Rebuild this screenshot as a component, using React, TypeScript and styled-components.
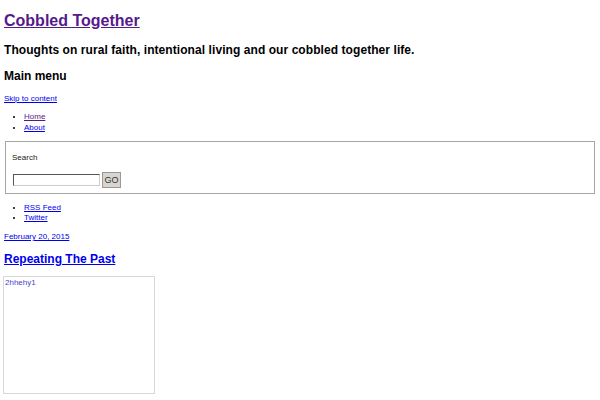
import React from "react";
import styled, { createGlobalStyle } from "styled-components";

const Global = createGlobalStyle`
  html, body { margin: 0; padding: 0; background: #fff; }
  body { font-family: "Liberation Sans", Arial, sans-serif; color: #000; }
  a { color: #0000ee; }
`;

const Page = styled.div`
  padding: 0 4px;
  display: flex;
  flex-direction: column;
  align-items: flex-start;
`;

const SiteTitle = styled.h1`
  margin: 11px 0 0;
  font-size: 16px;
  line-height: 20px;
  font-weight: bold;
  a { color: #551a8b; }
`;

const Tagline = styled.h2`
  margin: 11px 0 0;
  font-size: 12px;
  line-height: 16px;
  font-weight: bold;
  letter-spacing: 0.07px;
`;

const MenuHeading = styled.h3`
  margin: 10px 0 0;
  font-size: 12px;
  line-height: 16px;
  font-weight: bold;
`;

const SmallLink = styled.a<{ $visited?: boolean; $mt?: number }>`
  display: block;
  margin-top: ${(p) => p.$mt ?? 0}px;
  font-size: 8px;
  line-height: 10px;
  color: ${(p) => (p.$visited ? "#551a8b" : "#0000ee")};
`;

const List = styled.ul<{ $mt: number; $lh: number }>`
  margin: ${(p) => p.$mt}px 0 0;
  padding: 0 0 0 20px;
  font-size: 8px;
  line-height: ${(p) => p.$lh}px;
`;

const Item = styled.li<{ $visited?: boolean }>`
  a { color: ${(p) => (p.$visited ? "#551a8b" : "#0000ee")}; }
`;

const SearchBox = styled.form`
  align-self: stretch;
  margin: 8px 1px 0;
  border: 1px solid #a6a6a6;
  height: 51px;
  padding: 0 6px;
  display: flex;
  flex-direction: column;
  align-items: flex-start;
`;

const SearchLabel = styled.label`
  margin-top: 11px;
  font-size: 8px;
  line-height: 10px;
  color: #222;
`;

const SearchRow = styled.div`
  margin-top: 9px;
  display: flex;
  align-items: center;
  gap: 2px;
  padding-left: 1px;
`;

const SearchInput = styled.input`
  box-sizing: border-box;
  width: 87px;
  height: 12px;
  margin: 0;
  padding: 0;
  border: 1px solid #555;
  border-right-color: #ccc;
  border-bottom-color: #ccc;
  background: #fff;
`;

const GoButton = styled.button`
  box-sizing: border-box;
  width: 19px;
  height: 16px;
  margin: 0;
  padding: 0;
  border: 1px solid #999;
  background: #d8d5cf;
  font-family: "Liberation Sans", Arial, sans-serif;
  font-size: 9px;
  color: #333;
`;

const PostTitle = styled.h2`
  margin: 9px 0 0;
  font-size: 12px;
  line-height: 16px;
  font-weight: bold;
`;

const ImageBox = styled.a`
  display: block;
  margin: 9px 0 0 -1px;
  box-sizing: border-box;
  width: 152px;
  height: 118px;
  border: 1px solid #d8d8d8;
  padding: 1px 0 0 1px;
  font-size: 8px;
  line-height: 10px;
  color: #4a3fd6;
  text-decoration: none;
`;

export default function App() {
  return (
    <>
      <Global />
      <Page>
        <SiteTitle><a href="#">Cobbled Together</a></SiteTitle>
        <Tagline>Thoughts on rural faith, intentional living and our cobbled together life.</Tagline>
        <MenuHeading>Main menu</MenuHeading>
        <SmallLink href="#" $mt={10}>Skip to content</SmallLink>
        <List $mt={7} $lh={11}>
          <Item $visited><a href="#">Home</a></Item>
          <Item><a href="#">About</a></Item>
        </List>
        <SearchBox onSubmit={(e) => e.preventDefault()}>
          <SearchLabel>Search</SearchLabel>
          <SearchRow>
            <SearchInput type="text" />
            <GoButton type="submit">GO</GoButton>
          </SearchRow>
        </SearchBox>
        <List $mt={9} $lh={10}>
          <Item><a href="#">RSS Feed</a></Item>
          <Item><a href="#">Twitter</a></Item>
        </List>
        <SmallLink href="#" $mt={9}>February 20, 2015</SmallLink>
        <PostTitle><a href="#">Repeating The Past</a></PostTitle>
        <ImageBox href="#">2hhehy1</ImageBox>
      </Page>
    </>
  );
}
